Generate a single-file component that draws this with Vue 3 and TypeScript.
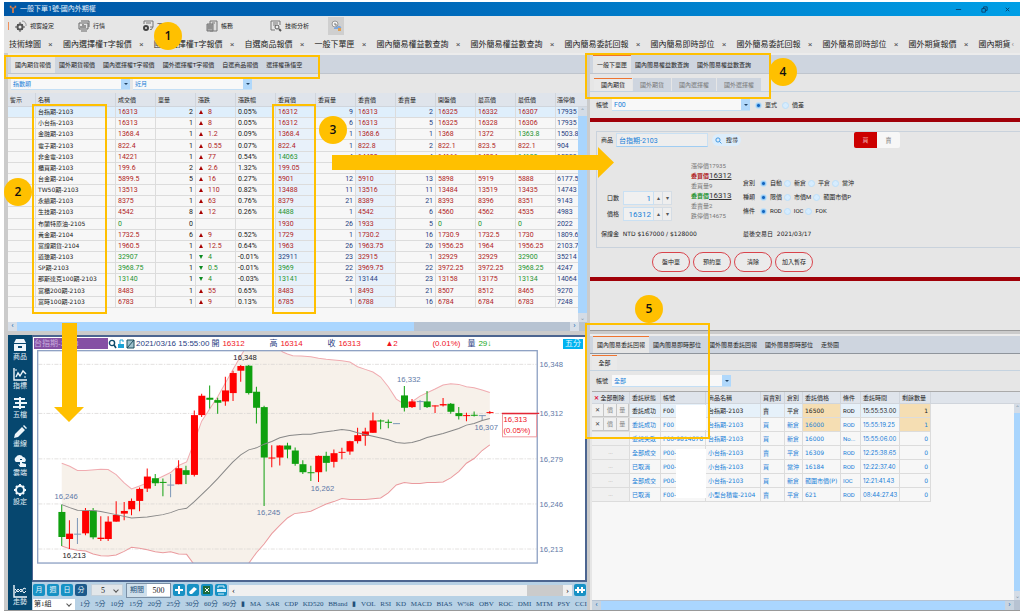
<script setup lang="ts">
import { ref } from 'vue'

type Tone = 'r' | 'g' | 'k'
interface Quote {
  name: string
  price: string
  qty: string
  dir: 'up' | 'down' | ''
  change: string
  pct: string
  cells: string[]
  tones: string
}

/* cells: bid, bid qty, ask, ask qty, open, high, low, limit up */
const q = (
  name: string, price: string, qty: string, dir: 'up' | 'down' | '',
  change: string, pct: string, cells: string, tones: string,
): Quote => ({ name, price, qty, dir, change, pct, cells: cells.split(' '), tones })

const quotes: Quote[] = [
  q('台指期-2103', '16313', '2', 'up', '8', '0.05%', '16312 9 16313 2 16325 16332 16307 17935', 'rkrkrrrk'),
  q('小台指-2103', '16313', '1', 'up', '8', '0.05%', '16312 6 16313 5 16325 16328 16306 17935', 'rkrkrrrk'),
  q('金融期-2103', '1368.4', '1', 'up', '1.2', '0.09%', '1368.4 1 1368.6 1 1368 1372 1363.8 1503.8', 'rkrkrrgk'),
  q('電子期-2103', '822.4', '1', 'up', '0.55', '0.07%', '822.4 1 822.8 2 822.1 823.5 822.1 904', 'rkrkrrrk'),
  q('非金電-2103', '14221', '1', 'up', '77', '0.54%', '14063 4 14400 4 14166 14234 14129 15558', 'gkrkrrgk'),
  q('櫃買期-2103', '199.6', '2', 'up', '2.6', '1.32%', '199.05 15 199.95 2 199.2 199.9 199.1 216.7', 'rkrkrrrk'),
  q('台金期-2104', '5899.5', '5', 'up', '16', '0.27%', '5901 12 5910 13 5898 5919 5888 6177.5', 'rkrkrrrk'),
  q('TW50期-2103', '13513', '1', 'up', '110', '0.82%', '13488 11 13516 11 13484 13519 13435 14743', 'rkrkrrrk'),
  q('永續期-2103', '8375', '1', 'up', '63', '0.76%', '8379 21 8389 21 8393 8396 8351 9143', 'rkrkrrrk'),
  q('生技期-2103', '4542', '8', 'up', '12', '0.26%', '4488 1 4542 6 4560 4562 4535 4983', 'gkrkrrrk'),
  q('布蘭特原油-2105', '0', '0', '', '', '', '1930 26 1933 5 0 0 0 2022', 'rkrkgggk'),
  q('黃金期-2104', '1732.5', '6', 'up', '9', '0.52%', '1729 1 1730.2 16 1730.9 1732.5 1730 1809.6', 'rkrkrrrk'),
  q('富證期貨-2104', '1960.5', '1', 'up', '12.5', '0.64%', '1963 26 1963.75 26 1956.25 1964 1956.25 2103.7', 'rkrkrrrk'),
  q('道瓊期-2103', '32907', '1', 'down', '4', '-0.01%', '32911 23 32915 1 32929 32929 32900 35214', 'kkrkrrgk'),
  q('SP期-2103', '3968.75', '1', 'down', '0.5', '-0.01%', '3969 22 3969.75 22 3972.25 3972.25 3968.25 4247', 'gkrkrrgk'),
  q('那斯達克100期-2103', '13140', '1', 'down', '4', '-0.03%', '13141 22 13144 23 13158 13175 13134 14064', 'gkkkrrgk'),
  q('富櫃200期-2103', '8483', '1', 'up', '55', '0.65%', '8483 1 8493 21 8507 8512 8465 9270', 'rkrkrrrk'),
  q('富時100期-2103', '6783', '1', 'up', '9', '0.13%', '6785 1 6788 16 6784 6784 6783 7248', 'rkrkrrrk'),
]
const quoteHeads = ['警示', '名稱', '成交價', '單量', '漲跌', '漲跌幅', '委買價', '委買量', '委賣價', '委賣量', '開盤價', '最高價', '最低價', '漲停價']
const priceTone = (r: Quote): Tone => (r.dir === 'up' ? 'r' : 'g')

const pageTabs = ['技術線圖', '國內選擇權T字報價', '國外選擇權T字報價', '自選商品報價', '一般下單匣', '國內簡易權益數查詢', '國外簡易權益數查詢', '國內簡易委託回報', '國內簡易即時部位', '國外簡易委託回報', '國外簡易即時部位', '國外期貨報價', '國內期貨']
const quoteTabs = ['國內期貨報價', '國外期貨報價', '國內選擇權T字報價', '國外選擇權T字報價', '自選商品報價', '選擇權孫悟空']
const orderTabs = ['一般下單匣', '國內簡易權益數查詢', '國外簡易權益數查詢']
const marketTabs = ['國內期貨', '國外期貨', '國內選擇權', '國外選擇權']
const reportTabs = ['國內簡易委託回報', '國內簡易即時部位', '國外簡易委託回報', '國外簡易即時部位', '走勢圖']

const reportHeads = ['委託狀態', '帳號', '商品名稱', '買賣別', '倉別', '委託價格', '條件', '委託時間', '剩餘數量']
const reports = [
  ['委託成功', 'F00', '台指期-2103', '賣', '平倉', '16500', 'ROD', '15:55:53.00', '1'],
  ['委託成功', 'F00', '台指期-2103', '買', '新倉', '16000', 'ROD', '15:55:19.25', '1'],
  ['委託失敗', 'F00-9814676', '台指期-2103', '買', '新倉', '16000', 'No...', '15:55:06.00', '0'],
  ['全部成交', 'P00-', '小台指-2103', '賣', '平倉', '16309', 'ROD', '12:25:38.65', '0'],
  ['已取消', 'P00-', '小台指-2103', '買', '當沖', '16184', 'ROD', '12:22:37.40', '0'],
  ['全部成交', 'P00-', '小台指-2103', '買', '新倉', '範圍市價(P)', 'IOC', '12:21:41.43', '0'],
  ['已取消', 'F00-', '小型台積電-2104', '賣', '平倉', '621', 'ROD', '08:44:27.43', '0'],
]

const radioGroups = [
  { id: 'pos', label: '倉別', options: ['自動', '新倉', '平倉', '當沖'] },
  { id: 'kind', label: '種類', options: ['限價', '市價M', '範圍市價P'] },
  { id: 'cond', label: '條件', options: ['ROD', 'IOC', 'FOK'] },
]
const chosen = ref<Record<string, string>>({ pos: '自動', kind: '限價', cond: 'ROD', mode: '單式' })
const product = ref('台指期-2103')
const lots = ref('1')
const limit = ref('16312')
const span = ref('500')

const minutes = ['1分', '5分', '10分', '15分', '20分', '25分', '30分', '60分', '90分', '▮', 'MA', 'SAR', 'CDP', 'KD520', 'BBand', '▮', 'VOL', 'RSI', 'KD', 'MACD', 'BIAS', 'W%R', 'OBV', 'ROC', 'DMI', 'MTM', 'PSY', 'CCI']

/* x, wick top, body top, body bottom, wick bottom, colour */
type Candle = [number, number, number, number, number, 'r' | 'g' | 'b']
const candles: Candle[] = [
  [188, 508, 530, 605, 632, 'g'], [211, 555, 595, 611, 641, 'r'], [235, 548, 595, 597, 626, 'b'], [259, 518, 527, 594, 600, 'r'],
  [282, 518, 526, 606, 612, 'g'], [305, 543, 607, 611, 617, 'r'], [327, 543, 559, 611, 617, 'r'], [351, 498, 539, 559, 559, 'r'],
  [375, 500, 527, 535, 555, 'r'], [397, 490, 497, 522, 540, 'r'], [421, 457, 461, 497, 528, 'r'], [444, 400, 424, 460, 470, 'r'],
  [468, 416, 429, 444, 452, 'g'], [491, 430, 440, 443, 483, 'g'], [514, 416, 448, 450, 486, 'b'], [538, 375, 399, 447, 447, 'r'],
  [560, 392, 405, 419, 446, 'g'], [585, 226, 240, 419, 424, 'r'], [607, 176, 182, 240, 246, 'r'], [631, 151, 188, 194, 220, 'g'],
  [655, 188, 195, 203, 236, 'g'], [678, 125, 166, 199, 212, 'r'], [701, 107, 114, 174, 198, 'r'], [724, 90, 93, 107, 140, 'r'],
  [748, 90, 92, 174, 178, 'g'], [771, 155, 170, 218, 265, 'g'], [794, 212, 216, 367, 512, 'g'], [817, 330, 367, 370, 396, 'r'],
  [841, 330, 331, 367, 391, 'r'], [864, 323, 331, 343, 369, 'g'], [887, 337, 346, 386, 392, 'g'], [910, 375, 387, 411, 416, 'g'],
  [934, 392, 411, 413, 437, 'g'], [957, 361, 362, 411, 440, 'r'], [980, 350, 362, 383, 409, 'g'], [1003, 343, 354, 380, 397, 'r'],
  [1027, 338, 350, 353, 372, 'r'], [1051, 317, 318, 349, 359, 'r'], [1074, 278, 300, 318, 325, 'r'], [1097, 278, 289, 302, 332, 'r'],
  [1120, 232, 256, 293, 293, 'r'], [1143, 253, 256, 259, 282, 'g'], [1166, 253, 260, 263, 279, 'g'], [1190, 264, 264, 266, 266, 'b'],
  [1214, 153, 181, 218, 229, 'g'], [1237, 192, 199, 216, 219, 'r'], [1261, 195, 198, 200, 225, 'b'], [1282, 168, 199, 216, 219, 'g'],
  [1306, 211, 211, 214, 234, 'r'], [1330, 189, 207, 211, 214, 'r'], [1353, 204, 206, 230, 236, 'g'], [1377, 216, 234, 243, 253, 'g'],
  [1400, 233, 240, 243, 258, 'r'], [1423, 229, 239, 242, 244, 'g'], [1447, 240, 240, 242, 256, 'b'], [1470, 228, 231, 234, 236, 'r'],
]
const upper = '188,384 212,393 235,406 260,406 305,402 327,403 351,418 375,443 397,461 421,452 444,443 468,434 491,423 514,412 538,391 562,380 585,320 607,258 655,185 700,105 724,63 738,40 835,40 850,51 864,57 880,62 905,63 934,65 957,70 980,73 1027,77 1051,81 1074,95 1097,103 1120,111 1143,126 1166,155 1190,192 1214,207 1237,200 1261,183 1306,162 1330,150 1353,146 1377,148 1400,155 1423,158 1447,165 1470,172'
const lower = '188,632 212,640 235,645 260,647 282,656 305,661 327,662 351,659 375,648 397,636 421,639 444,643 468,649 491,652 514,649 538,656 562,657 585,688 745,688 771,652 794,626 817,595 841,570 864,548 885,535 910,532 934,528 957,517 980,506 1003,499 1027,490 1051,493 1097,493 1143,488 1166,473 1190,449 1214,442 1237,445 1261,445 1282,442 1306,442 1330,440 1353,428 1377,409 1400,384 1423,370 1447,346 1470,329'
const middle = '188,508 212,517 235,525 282,526 305,529 351,538 397,548 444,545 491,538 514,532 538,523 562,519 585,499 607,478 631,455 655,430 678,405 700,381 724,359 748,344 771,338 794,327 817,319 841,308 870,301 910,297 934,297 957,293 1003,287 1027,283 1051,286 1074,293 1120,303 1166,314 1190,322 1214,324 1237,322 1261,315 1282,307 1330,295 1377,280 1400,270 1423,265 1447,256 1470,250'
const band = `${upper} ${lower.split(' ').reverse().join(' ')}`
const levels: [string, number][] = [['16,348', 88], ['16,312', 235], ['16,279', 371], ['16,246', 506], ['16,213', 641]]
</script>

<template>
  <div class="page">
    <div class="window">
      <header class="titlebar">
        <svg class="logo" viewBox="0 0 10 10"><path d="M1 1h2v2H1zM4 4h2v6H4zM7 1h2v2H7zM2 3h6v1H2z" fill="#f0803c" /></svg>
        <span class="title">一般下單1號-國內外期權</span>
        <button class="win" aria-label="最小化"><svg viewBox="0 0 8 8"><path d="M1 4h6" /></svg></button>
        <button class="win" aria-label="還原"><svg viewBox="0 0 8 8"><path d="M1 3h4v4H1zM3 3V1h4v4H5" /></svg></button>
        <button class="win" aria-label="關閉"><svg viewBox="0 0 8 8"><path d="M2 2l4 4M6 2l-4 4" /></svg></button>
      </header>

      <nav class="toolbar">
        <i class="grip"></i>
        <button class="tool t1">
          <svg viewBox="0 0 12 12"><circle cx="5" cy="7" r="2.5" fill="none" stroke="#555" stroke-width="2" /><path d="M5 2v2M5 10v2M0 7h2M8 7h2M2 4l1 1M8 4l-1 1M2 10l1-1M8 10l-1-1" stroke="#555" /><path d="M7 1a4 4 0 0 1 4 5" fill="none" stroke="#999" /></svg>視窗設定
        </button>
        <button class="tool t2">
          <svg viewBox="0 0 12 12"><path d="M1 3h9v6H1zM3 1h8v6M3 11h6" fill="none" stroke="#666" /><path d="M3 8V6M5 8V4M7 8V5" stroke="#444" /></svg>行情
        </button>
        <button class="tool t3">
          <svg viewBox="0 0 12 12"><path d="M2 4V1h9v6H8M4 3h5" fill="none" stroke="#777" /><circle cx="4" cy="8" r="2" fill="none" stroke="#444" stroke-width="2" /><path d="M8 9l1 1 2-3" fill="none" stroke="#777" /></svg>下單
        </button>
        <button class="tool t4">
          <svg viewBox="0 0 12 12"><path d="M4 1h7v10H4z" fill="#ddd" stroke="#777" /><path d="M1 4h6v7H1zM2 6h4M2 8h4M6 3h3" fill="#aaa" stroke="#777" /></svg>帳務
        </button>
        <button class="tool t5">
          <svg viewBox="0 0 12 12"><path d="M1 10V1h9v4M1 10h4M3 3h5M3 5h3" fill="none" stroke="#777" /><circle cx="7" cy="7" r="2" fill="#eee" stroke="#555" /><path d="M9 9l2 2" stroke="#555" stroke-width="2" /></svg>技術分析
        </button>
        <button class="tool pinned" aria-label="雲端設定">
          <svg viewBox="0 0 12 12"><circle cx="5" cy="4" r="3" fill="#f2f2f2" stroke="#999" /><path d="M5 3v2h2" stroke="#777" fill="none" /><path d="M4 9a2 2 0 0 1 3-2 2 2 0 0 1 4 2z" fill="#7fa7dc" /><path d="M8 8h3v3H8z" fill="#e0a050" /></svg>
        </button>
      </nav>

      <nav class="pagetabs">
        <span v-for="(t, i) in pageTabs" :key="t" class="ptab">
          <button class="plabel">{{ t }}</button>
          <button v-if="i < 12" class="px" :aria-label="'關閉' + t">×</button>
        </span>
        <span class="more">‹</span>
      </nav>

      <main class="work">
        <section class="left">
          <div class="quotes">
            <div class="strip">
              <button v-for="(t, i) in quoteTabs" :key="t" class="tab" :class="{ on: i === 0 }">{{ t }}</button>
            </div>
            <div class="filters">
              <span class="pick"><select aria-label="類別"><option>指數類</option></select><i></i></span>
              <span class="pick"><select aria-label="月份"><option>近月</option></select><i></i></span>
            </div>
            <div class="qwrap">
              <table class="qt">
                <colgroup>
                  <col class="c28" /><col class="c80" /><col v-for="n in 11" :key="n" class="c40" /><col />
                </colgroup>
                <thead>
                  <tr><th v-for="h in quoteHeads" :key="h">{{ h }}</th></tr>
                </thead>
                <tbody>
                  <tr v-for="(r, i) in quotes" :key="r.name" :class="{ sel: i === 0 }">
                    <td></td>
                    <td class="nm">{{ r.name }}</td>
                    <td :class="priceTone(r)">{{ r.price }}</td>
                    <td class="num">{{ r.qty }}</td>
                    <td :class="priceTone(r)"><i v-if="r.dir" class="tri" :class="r.dir"></i>{{ r.change }}</td>
                    <td>{{ r.pct }}</td>
                    <td v-for="(c, k) in r.cells" :key="k" :class="[r.tones[k], { num: k === 1 || k === 3, tint: k === 0 || k === 2 }]">{{ c }}</td>
                  </tr>
                </tbody>
              </table>
              <div class="vbar"><span>⌃</span><span>⌄</span></div>
            </div>
            <div class="hbar"><span>‹</span><i></i><span>›</span></div>
          </div>

          <div class="chartbox">
            <aside class="side">
              <button><svg viewBox="0 0 14 14"><path d="M3 1h8l2 4H1zM1 6h12v7H1z" fill="#eef6fb" /><path d="M5 9h4" stroke="#06476f" stroke-width="2" /></svg>商品</button>
              <button><svg viewBox="0 0 14 14"><path d="M1 1v12h13M3 10l2-4 2 3 3-5 3 3" fill="none" stroke="#eef6fb" stroke-width="1.4" /><path d="M3 2v2M12 9v2" stroke="#eef6fb" /></svg>指標</button>
              <button><svg viewBox="0 0 14 14"><path d="M1 2h5v2H1zM2 6h4v2H2zM0 10h6v2H0zM8 2h4v2H8zM8 6h6v2H8zM8 10h4v2H8zM6 1h2v12H6z" fill="#eef6fb" /></svg>五檔</button>
              <button><svg viewBox="0 0 14 14"><path d="M1 13l1-4 7-7 3 3-7 7zM10 1l1-1 3 3-1 1z" fill="#eef6fb" /></svg>畫線</button>
              <button><svg viewBox="0 0 14 14"><path d="M3 8a3 3 0 0 1 0-5 4 4 0 0 1 7 0 3 3 0 0 1 2 5H9V5H7v3z" fill="#eef6fb" /><path d="M7 6h2v3l4 1v3H7L5 10l2 1z" fill="#eef6fb" /></svg>雲端</button>
              <button><svg viewBox="0 0 14 14"><circle cx="7" cy="7" r="4" fill="none" stroke="#eef6fb" stroke-width="2" /><path d="M7 1v2M7 11v2M1 7h2M11 7h2M3 3l1 1M10 10l1 1M11 3l-1 1M4 10l-1 1" stroke="#eef6fb" stroke-width="2" /></svg>設定</button>
              <button class="last"><svg viewBox="0 0 14 14"><path d="M1 1v12h13" fill="none" stroke="#eef6fb" stroke-width="1.4" /><path d="M2 9l3-4 3 3 3-4 2 1M2 5l3 3 3-3 3 4 2-2" fill="none" stroke="#eef6fb" /></svg>走勢</button>
            </aside>
            <div class="charts">
              <div class="canvas">
                <div class="info">
                  <span class="sym">台指期-2103</span>
                  <svg class="mini" viewBox="0 0 9 10"><path d="M0 0h9v10H0z" fill="#fff" /><circle cx="4" cy="4" r="2.6" fill="none" stroke="#0d4a6a" stroke-width="1.4" /><path d="M6 6l2 3" stroke="#0d4a6a" stroke-width="1.6" /></svg>
                  <svg class="mini" viewBox="0 0 9 10"><path d="M0 0h9v10H0z" fill="#fff" /><path d="M1 5h6v4H1z" fill="#1ba3d6" /><path d="M3 5V1h3v2" fill="none" stroke="#1ba3d6" /></svg>
                  <svg class="mini" viewBox="0 0 9 10"><path d="M0 0h9v10H0z" fill="#fff" /><path d="M1 1h7v8H1zM1 9l7-8" fill="#9fc1cc" stroke="#1d4c5c" /></svg>
                  <b class="when">2021/03/16 15:55:00</b>
                  <b class="k">開</b><b class="v w46">16312</b>
                  <b class="k">高</b><b class="v w46">16314</b>
                  <b class="k">收</b><b class="v w46">16313</b>
                  <b class="v w46">▲2</b><b class="v w36">(0.01%)</b>
                  <b class="k">量</b><b class="gn">29↓</b>
                  <b class="five">五分</b>
                </div>
                <svg class="plot" viewBox="102 45 1653 690">
                  <defs><clipPath id="frame"><rect x="116" y="46" width="1496" height="637" /></clipPath></defs>
                  <g clip-path="url(#frame)">
                    <polygon :points="band" fill="#f7f1ea" />
                    <line v-for="l in levels" :key="l[0]" x1="118" x2="1610" :y1="l[1]" :y2="l[1]" stroke="#d4d2d0" stroke-width="2" stroke-dasharray="12 4 4 4" />
                    <polyline :points="upper" class="ln up" />
                    <polyline :points="lower" class="ln lo" />
                    <g v-for="c in candles" :key="c[0]" :class="'cd-' + c[5]">
                      <line :x1="c[0]" :x2="c[0]" :y1="c[1]" :y2="c[4]" stroke-width="3" />
                      <rect :x="c[0] - 10" :y="c[2]" width="21" :height="Math.max(c[3] - c[2], 3)" stroke="none" />
                    </g>
                    <polyline :points="middle" class="ln mid" />
                  </g>
                  <rect x="116" y="47" width="1496" height="636" fill="none" stroke="#8fa2c4" stroke-width="4" />
                  <text v-for="l in levels" :key="l[0]" x="1619" :y="l[1] + 9">{{ l[0] }}</text>
                  <text x="702" y="74" class="dk">16,348</text>
                  <text x="166" y="491">16,246</text>
                  <text x="190" y="669" class="dk">16,213</text>
                  <text x="772" y="538">16,245</text>
                  <text x="1192" y="140">16,332</text>
                  <text x="934" y="468">16,262</text>
                  <text x="1424" y="284">16,307</text>
                  <rect x="1508" y="237" width="102" height="68" fill="#fff" stroke="#f09aa0" stroke-width="3" />
                  <line x1="1506" x2="1618" y1="235" y2="235" stroke="#e32636" stroke-width="4" />
                  <text x="1511" y="262" class="rd">16,313</text>
                  <text x="1511" y="293" class="rd">(0.05%)</text>
                </svg>
              </div>
              <div class="bar1">
                <button class="sq">月</button><button class="sq">週</button><button class="sq">日</button><button class="sq dk">分</button>
                <span class="drop mins"><select aria-label="分鐘"><option>5</option></select></span>
                <label class="span">期間<input v-model="span" /></label>
                <button class="sq" aria-label="新增"><svg viewBox="0 0 12 12"><path d="M6 2v8M2 6h8" stroke="#fff" stroke-width="2" /></svg></button>
                <button class="sq" aria-label="清除畫線"><svg viewBox="0 0 12 12"><path d="M2 8l5-5 3 2-5 5H3z" fill="#fff" /></svg></button>
                <button class="sq" aria-label="匯出"><svg viewBox="0 0 12 12"><path d="M2 2h7v8H2z" fill="#1d6b3c" /><path d="M4 4l4 4M8 4L4 8" stroke="#fff" /></svg></button>
                <button class="sq" aria-label="列印"><svg viewBox="0 0 12 12"><path d="M3 4V2h6v2M3 10h6" fill="none" stroke="#d9f1fb" /><rect x="2" y="5" width="9" height="3" fill="#d9f1fb" /></svg></button>
                <span class="track"><i>‹</i><s></s><i>›</i></span>
                <button class="sq" aria-label="拉寬"><svg viewBox="0 0 12 12"><path d="M4 3v6M1 6h10M8 3v6" stroke="#fff" stroke-width="2" /></svg></button>
              </div>
              <div class="bar2">
                <span class="drop grp"><select aria-label="組別"><option>第1組</option></select></span>
                <button v-for="(m, i) in minutes" :key="i">{{ m }}</button>
              </div>
            </div>
          </div>
        </section>

        <section class="right">
          <div class="order">
            <div class="strip">
              <button v-for="(t, i) in orderTabs" :key="t" class="tab" :class="{ on: i === 0 }">{{ t }}</button>
            </div>
            <div class="substrip">
              <button v-for="(t, i) in marketTabs" :key="t" class="stab" :class="{ on: i === 0 }">{{ t }}</button>
            </div>
            <div class="acct">
              <label for="acct">帳號</label>
              <span class="pick wide"><select id="acct"><option>F00</option></select><i></i></span>
              <label v-for="m in ['單式', '價差']" :key="m" class="rad"><input v-model="chosen.mode" type="radio" name="mode" :value="m" />{{ m }}</label>
            </div>
            <hr class="rule" />
            <div class="ticket">
              <div class="prod">
                <label for="prod">商品</label>
                <input id="prod" v-model="product" />
                <button class="find"><svg viewBox="0 0 8 8"><circle cx="3.4" cy="3.4" r="2.4" fill="none" stroke="#2f8fe0" /><path d="M5.2 5.2L7.4 7.4" stroke="#2f8fe0" /></svg>搜尋</button>
                <span class="bs"><button class="buy">買</button><button class="sell">賣</button></span>
              </div>
              <div class="cols">
                <div class="nums">
                  <div><label for="lots">口數</label><input id="lots" v-model="lots" /><button aria-label="增加口數">▴</button><button aria-label="減少口數">▾</button></div>
                  <div><label for="lim">價格</label><input id="lim" v-model="limit" /><button aria-label="提高價格">▴</button><button aria-label="降低價格">▾</button></div>
                </div>
                <div class="depth">
                  <div>漲停價17935</div>
                  <div class="big r"><b>委買價</b><u>16312</u></div>
                  <div>委買量9</div>
                  <div class="big g"><b>委賣價</b><u>16313</u></div>
                  <div>委賣量2</div>
                  <div>跌停價14675</div>
                </div>
                <div class="radios">
                  <div v-for="g in radioGroups" :key="g.id">
                    <span>{{ g.label }}</span>
                    <label v-for="o in g.options" :key="o" class="rad"><input v-model="chosen[g.id]" type="radio" :name="g.id" :value="o" />{{ o }}</label>
                  </div>
                </div>
              </div>
              <div class="margin"><span>保證金&nbsp; NTD $167000 / $128000</span><span>最後交易日&nbsp; 2021/03/17</span></div>
            </div>
            <div class="acts">
              <button>盤中單</button><button>預約單</button><button>清除</button><button>加入暫存</button>
            </div>
            <hr class="rule" />
          </div>

          <div class="report">
            <div class="strip">
              <button v-for="(t, i) in reportTabs" :key="t" class="tab" :class="{ on: i === 0 }">{{ t }}</button>
            </div>
            <div class="substrip all"><button class="stab on">全部</button></div>
            <div class="acct rp">
              <label for="racct">帳號</label>
              <span class="pick"><select id="racct"><option>全部</option></select><i></i></span>
            </div>
            <div class="rwrap">
              <div class="rtop">
                <table class="rt">
                  <colgroup><col class="w38" /><col class="w31" /><col class="w45" /><col class="w55" /><col class="w24" /><col class="w18" /><col class="w38" /><col class="w20" /><col class="w39" /><col class="w31" /><col /></colgroup>
                  <thead><tr><th><em>✕</em> 全部刪除</th><th v-for="h in reportHeads" :key="h">{{ h }}</th><th></th></tr></thead>
                  <tbody>
                    <tr v-for="(r, i) in reports" :key="i" :class="{ first: i === 0 }">
                      <td class="ops">
                        <span v-if="i < 2"><button class="x">✕</button><button>價</button><button>量</button></span>
                        <span v-else class="dots">{{ i > 2 ? '···' : '' }}</span>
                      </td>
                      <td v-for="(c, k) in r" :key="k" :class="{ hot: i < 2 && (k === 5 || k === 8), num: k === 8, wide: k === 1 || k === 2 || k === 5 || k === 8, time: k === 7 }">{{ c }}</td>
                      <td class="fill"></td>
                    </tr>
                  </tbody>
                </table>
                <div class="vbar rv"><span>⌃</span><span>⌄</span></div>
              </div>
              <div class="hbar rh"><span>‹</span><i></i><span>›</span></div>
              <span class="mask m1"></span><span class="mask m2"></span>
            </div>
          </div>
        </section>

        <div class="box b1"></div><div class="box b2"></div><div class="box b3"></div><div class="box b4"></div><div class="box b5"></div>
        <svg class="arrow ar" viewBox="0 0 282 31"><path d="M0 8h266V0l16 15.5L266 31v-8H0z" fill="#ffc000" /></svg>
        <svg class="arrow ad" viewBox="0 0 30 99"><path d="M8 0h15v84h7L15 99 0 84h8z" fill="#ffc000" /></svg>
        <div class="dot d1">1</div><div class="dot d2">2</div><div class="dot d3">3</div><div class="dot d4">4</div><div class="dot d5">5</div>
      </main>
    </div>
  </div>
</template>

<style>
body { margin: 0; background: #fff; }
</style>

<style scoped>
* { box-sizing: border-box; }
.page { min-height: 100vh; padding: 2px 4px 4px; background: #fff; font: 6px/8px Roboto, "Noto Sans CJK TC", sans-serif; color: #222; }
button, input, select { margin: 0; padding: 0; border: 0; border-radius: 0; background: none; font: inherit; color: inherit; appearance: none; outline: none; white-space: nowrap; }
svg { display: block; }
.window { background: #e6e6e6; }
.titlebar { display: flex; align-items: center; height: 14px; padding: 0 3px 0 5px; background: linear-gradient(90deg, #0058a6, #0067b8 40%, #009fe6); color: #e8f2fa; font-size: 7px; line-height: 14px; }
.logo { width: 8px; height: 8px; margin-right: 3px; }
.title { flex: 1; }
.win { width: 26px; display: flex; justify-content: center; }
.win svg { width: 7px; height: 7px; fill: none; stroke: #0c3c66; }
.win:last-child { width: 20px; }

.toolbar { display: flex; align-items: center; height: 20px; padding-left: 4px; }
.grip { width: 1px; height: 8px; background: #f0905a; }
.tool { display: flex; align-items: center; gap: 3px; height: 18px; margin-left: 24px; }
.tool svg { width: 12px; height: 12px; }
.t1 { margin-left: 6px; }
.t3, .t4, .t5 { margin-left: 37px; }
.pinned { margin-left: 19px; width: 16px; background: #cfcfcf; justify-content: center; }

.pagetabs { display: flex; align-items: center; gap: 10px; height: 17px; padding-left: 5px; font-size: 8px; line-height: 16px; white-space: nowrap; overflow: hidden; }
.ptab { display: flex; gap: 7px; }
.px { width: 5px; color: #555; }
.more { margin-left: -9px; color: #888; }

.work { position: relative; display: flex; gap: 3px; padding-left: 4px; background: #cbcbcb; border-bottom: 1px solid #999; }
.left { flex: 579 1 0; min-width: 0; display: flex; flex-direction: column; }
.right { flex: 430 1 0; min-width: 0; display: flex; flex-direction: column; gap: 3px; }
.quotes, .order, .report { background: #e6e6e6; border-top: 2px solid #ececec; }
.strip { display: flex; height: 19px; padding-left: 3px; background: #ced5df; border-bottom: 1px solid #bfc5cd; }
.tab { padding: 0 4px; border-top: 1px solid transparent; }
.tab.on { background: #e6e6e6; border-top-color: #ee7430; }
.filters { display: flex; gap: 3px; height: 19px; padding: 4px 3px; }
.pick { display: flex; width: 119px; height: 12px; background: #f8f8f8; border-bottom: 1px solid #c4dff5; }
.pick select { flex: 1; padding-left: 2px; color: #2080d8; min-width: 0; }
.pick i { width: 9px; background: #b0d8fb; display: grid; place-items: center; }
.pick i::after { content: ""; border: 2px solid transparent; border-top-color: #246; border-bottom: 0; }

.qwrap { position: relative; height: 229px; background: #f7f7f7; }
.qt { width: 100%; height: 215px; border-collapse: separate; border-spacing: 0; table-layout: fixed; font-size: 7px; line-height: 8px; }
.c28 { width: 28px; } .c80 { width: 80px; } .c40 { width: 40px; }
th, td { padding: 0 2px; text-align: left; overflow: hidden; white-space: nowrap; font-weight: 400; border-right: 1px solid #dcdcdc; border-bottom: 1px solid #dcdcdc; }
th { background: #dfe4eb; border-color: #d0d5dc; font-size: 6px; color: #222; }
.qt th { height: 14px; }
.qt th:last-child, .qt td:last-child { border-right: 0; padding: 0 0 0 1px; }
.nm { font-family: "DejaVu Sans", "Noto Sans CJK TC", sans-serif; font-size: 6px; }
.sel td { background: #dfeffc; }
.tint { background: #e8f1fa; }
.num { text-align: right; padding-right: 2px; }
.r { color: #b01c24; }
.g { color: #1f9330; }
.tri { display: inline-block; width: 4px; height: 4px; margin: 0 5px 0 1px; }
.tri.up { border: 2px solid transparent; border-bottom: 4px solid #a80000; border-top: 0; }
.tri.down { border: 2px solid transparent; border-top: 4px solid #0b8a20; border-bottom: 0; }
.vbar { position: absolute; top: 14px; right: 0; bottom: 0; width: 9px; background: linear-gradient(#d4dce6 9px, #a9d5fd 9px calc(100% - 9px), #d4dce6 calc(100% - 9px)); display: flex; flex-direction: column; justify-content: space-between; align-items: center; color: #8393a5; }
.hbar { display: flex; align-items: center; height: 9px; background: #b7c3d2; color: #1567b0; font-size: 8px; }
.hbar span { width: 9px; height: 9px; line-height: 8px; text-align: center; background: #d8dfe8; }
.hbar i { flex: 0 0 397px; height: 9px; background: #aad6ff; }
.hbar span:last-child { margin-left: auto; margin-right: 8px; }

.chartbox { display: flex; margin-top: 4px; flex: 1; }
.side { width: 24px; background: #06476f; display: flex; flex-direction: column; padding: 3px 0 2px; }
.side button { display: flex; flex-direction: column; align-items: center; gap: 1px; height: 29px; color: #e4f0f7; font-size: 7px; line-height: 9px; }
.side svg { width: 14px; height: 14px; }
.side .last { margin-top: auto; height: 24px; gap: 0; }
.charts { flex: 1; min-width: 0; background: #b7d1e5; }
.canvas { background: #fff; border: 1px solid #4c6590; border-top-width: 2px; border-right-width: 2px; border-bottom-width: 2px; }
.info { display: flex; align-items: center; height: 13px; padding: 0 2px 0 1px; font: 8px/12px "Liberation Sans", "Noto Sans CJK TC", sans-serif; white-space: nowrap; overflow: hidden; }
.info b { font-weight: 400; }
.sym { flex: 0 1 74px; background: #8550a4; color: #c9aede; height: 11px; line-height: 11px; }
.mini { width: 9px; height: 10px; flex: none; }
.when { color: #27407f; margin: 0 2px 0 1px; }
.k { color: #27407f; width: 11px; }
.v { color: #f0141e; }
.w46 { width: 47px; }
.w36 { width: 35px; }
.gn { color: #18a818; }
.five { margin-left: auto; background: #00b3f0; color: #e8f8ff; padding: 0 2px; line-height: 10px; }
.plot { width: 100%; height: auto; }
.plot text { font: 23px "Liberation Sans", sans-serif; fill: #5f7aa8; }
.plot .dk { fill: #222; }
.plot .rd { fill: #f0141e; }
.ln { fill: none; stroke-width: 3; }
.up { stroke: #f0abb0; } .lo { stroke: #ea9a9e; } .mid { stroke: #888; }
.cd-r { fill: #ff0000; stroke: #ff0000; }
.cd-g { fill: #0fa00f; stroke: #0fa00f; }
.cd-b { fill: #7d98b8; stroke: #7d98b8; }

.bar1 { display: flex; align-items: center; gap: 2px; height: 16px; padding: 0 1px; font: 7px/11px "Liberation Serif", "Noto Sans CJK TC", serif; }
.sq { flex: none; width: 12px; height: 12px; border-radius: 2px; background: #1791c4; color: #e6f6fd; text-align: center; }
.sq.dk { background: #1b5a8c; }
.sq svg { width: 12px; height: 12px; }
.drop { position: relative; display: flex; flex: none; height: 12px; color: #222; }
.drop select { flex: 1; min-width: 0; }
.drop::after { content: ""; position: absolute; right: 4px; top: 3px; width: 3px; height: 3px; border: solid #555; border-width: 0 1px 1px 0; transform: rotate(45deg); pointer-events: none; }
.mins { width: 32px; margin: 0 1px 0 2px; background: #e2e6e9; border: 1px solid #c4d0da; font-size: 8px; }
.mins select { padding-left: 9px; }
.span { display: flex; align-items: center; height: 15px; padding-left: 3px; border: 1px solid #7a8fa5; background: #cfdfeb; color: #1f4f7a; gap: 3px; }
.span input { width: 23px; height: 12px; background: #fff; text-align: center; font-size: 8px; color: #222; }
.track { flex: 1; display: flex; height: 11px; background: #f0f0f0; line-height: 10px; font-size: 9px; }
.track i { font-style: normal; width: 9px; text-align: center; }
.track s { width: 36px; margin-left: auto; background: #cbcbcb; }
.bar2 { display: flex; align-items: center; justify-content: space-between; height: 12px; padding-left: 1px; font: 7px/11px "Liberation Serif", "Noto Sans CJK TC", serif; color: #1f4f7a; overflow: hidden; }
.grp { width: 42px; height: 11px; background: #fff; padding-left: 1px; }

.order { height: 278px; border-bottom: 1px solid #999; }
.substrip { display: flex; gap: 1px; height: 18px; padding: 4px 0 0 4px; border-bottom: 1px solid #c5d3e0; }
.stab { padding: 0 7px; background: #ced5df; color: #777; border-top: 1px solid #ced5df; }
.stab.on { background: #e9e9e9; color: #222; border-top-color: #ee7430; }
.acct { display: flex; align-items: center; height: 26px; padding-left: 6px; gap: 4px; }
.acct label { min-width: 12px; }
.acct .pick.wide { width: 138px; font-size: 7px; }
.rad { display: inline-flex; align-items: center; gap: 3px; margin-left: 1px; }
.rad input { width: 7px; height: 7px; border-radius: 50%; background: #d6ecfe; border: 1px solid #bcdffa; }
.rad input:checked { background: radial-gradient(#1567c0 0 1px, #8cc4f2 2px); }
.rule { margin: 0; height: 4px; border: 0; background: #a00008; }
.ticket { margin: 9px 0 0 6px; height: 117px; border: 1px solid #c9d2dc; border-right: 0; padding-left: 4px; }
.prod { display: flex; align-items: center; height: 16px; gap: 3px; }
.prod input { width: 92px; height: 14px; margin-right: 1px; padding-left: 2px; background: #eeeeee; border: 1px solid #c9e0f3; border-bottom: 1px solid #9fcdf3; color: #2080d8; font-size: 7px; }
.find { display: flex; align-items: center; gap: 4px; height: 12px; padding: 0 3px; border-radius: 6px; background: #dcedfb; }
.find svg { width: 7px; height: 7px; }
.bs { display: flex; margin-left: 110px; }
.bs button { width: 23px; height: 16px; }
.buy { background: #cc0000; color: #f3b6b6; border-radius: 2px 0 0 2px; }
.sell { background: #f7f7f7; color: #777; border-radius: 0 2px 2px 0; }
.cols { display: flex; height: 78px; padding-top: 13px; }
.nums { width: 90px; padding: 30px 0 0 6px; display: flex; flex-direction: column; gap: 2px; }
.nums div { display: flex; align-items: center; }
.nums label { width: 16px; }
.nums input { width: 31px; height: 14px; text-align: right; padding-right: 2px; background: #f0f0f0; border: 1px solid #c9e0f3; color: #2080d8; font-size: 8px; }
.nums button { width: 9px; height: 14px; background: #eee; border: 1px solid #d5dde5; border-left: 0; color: #555; }
.depth { width: 52px; color: #777; line-height: 10px; }
.depth div { height: 10px; white-space: nowrap; }
.depth .r { color: #b01c24; } .depth .g { color: #1f9330; }
.big b { font-weight: 700; }
.big u { font-size: 8px; color: #333; }
.radios { padding-top: 15px; }
.radios div { display: flex; align-items: center; height: 14px; gap: 1px; }
.radios span { width: 15px; }
.margin { display: flex; height: 16px; line-height: 16px; font: 6px/16px "DejaVu Sans", "Noto Sans CJK TC", sans-serif; }
.margin span:first-child { width: 142px; }
.acts { display: flex; gap: 3px; padding: 4px 0 5px 62px; }
.acts button { width: 38px; height: 20px; border: 1px solid #d9444c; border-radius: 10px; background: #ebebeb; }

.report { flex: 1; display: flex; flex-direction: column; }
.report .strip { height: 18px; border-bottom-color: #8f959c; flex: none; }
.substrip.all { height: 17px; padding: 1px 0 0 2px; flex: none; }
.all .stab { width: 25px; padding: 0; }
.acct.rp { height: 20px; flex: none; }
.rwrap { flex: 1; position: relative; display: flex; flex-direction: column; margin-left: 2px; background: #f7f7f7; border-top: 1px solid #aaa; }
.rtop { flex: 1; position: relative; }
.rv { top: 12px; width: 6px; right: 0; }
.rt { width: 100%; border-collapse: separate; border-spacing: 0; table-layout: fixed; color: #2080d8; }
.rt th { height: 12px; }
.rt th:last-child, .rt .fill { border-right: 0; }
.rt th em { font-style: normal; color: #e0103a; font-weight: 700; }
.rt td { height: 14px; }
.rt .wide { font-family: "DejaVu Sans", "Noto Sans CJK TC", sans-serif; }
.rt .time { font-family: Inter, sans-serif; }
.first td { background: #e6f1fa; color: #222; }
.rt .fill { background: #f7f7f7; border-bottom: 0; }
.rt tr .hot { background: #f5deb3; }
.rt .ops { padding: 0; background: #f0f0f0; }
.ops span { display: flex; }
.ops button { flex: 1; height: 13px; border-right: 1px solid #c6c6c6; border-bottom: 1px solid #c6c6c6; color: #888; text-align: center; }
.ops .x { color: #444; }
.ops .dots { justify-content: center; color: #999; }
.w38 { width: 38px; } .w31 { width: 31px; } .w45 { width: 45px; } .w55 { width: 55px; } .w24 { width: 24px; } .w18 { width: 18px; } .w20 { width: 20px; } .w39 { width: 39px; }
.rh { height: 10px; padding-right: 6px; }
.rh i { flex: 1; }
.rh span { background: #c8d4e0; }
.rh span:last-child { margin-right: 0; }
.mask { position: absolute; left: 84px; width: 30px; background: #fff; }
.m1 { top: 13px; height: 25px; }
.m2 { top: 57px; height: 49px; }

.box { position: absolute; border: 2px solid #ffc000; pointer-events: none; }
.b1 { left: 0; top: 2px; width: 316px; height: 24px; }
.b2 { left: 28px; top: 51px; width: 75px; height: 210px; }
.b3 { left: 268px; top: 51px; width: 44px; height: 210px; }
.b4 { left: 581px; top: 0; width: 186px; height: 46px; }
.b5 { left: 581px; top: 270px; width: 125px; height: 116px; }
.arrow { position: absolute; pointer-events: none; }
.ar { left: 328px; top: 94px; width: 282px; height: 31px; }
.ad { left: 50px; top: 270px; width: 30px; height: 99px; }
.dot { position: absolute; width: 28px; height: 28px; border-radius: 50%; background: #ffc000; color: #111; font: 600 12px/28px "Open Sans", sans-serif; text-align: center; }
.d1 { left: 150px; top: -31px; }
.d2 { left: 0; top: 125px; }
.d3 { left: 315px; top: 63px; }
.d4 { left: 765px; top: 5px; }
.d5 { left: 631px; top: 242px; }
</style>
